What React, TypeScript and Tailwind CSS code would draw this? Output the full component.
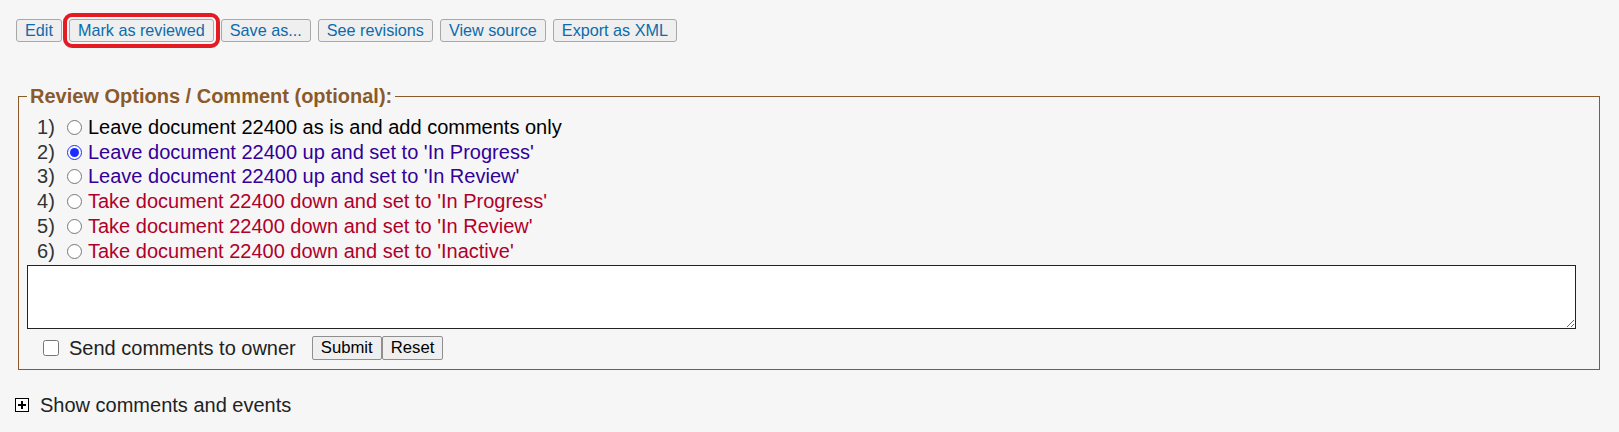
import { useState } from "react";

const toolbar = ["Edit", "Mark as reviewed", "Save as...", "See revisions", "View source", "Export as XML"];

const options = [
    { label: "Leave document 22400 as is and add comments only", tone: "text-black" },
    { label: "Leave document 22400 up and set to 'In Progress'", tone: "text-[#330099]" },
    { label: "Leave document 22400 up and set to 'In Review'", tone: "text-[#330099]" },
    { label: "Take document 22400 down and set to 'In Progress'", tone: "text-[#b0002a]" },
    { label: "Take document 22400 down and set to 'In Review'", tone: "text-[#b0002a]" },
    { label: "Take document 22400 down and set to 'Inactive'", tone: "text-[#b0002a]" },
];

const PlusBox = () => (
    <svg width="14" height="14" viewBox="0 0 14 14" className="shrink-0 -ml-px">
        <rect x="0.5" y="0.5" width="13" height="13" fill="#fff" stroke="#000" />
        <path d="M3 7h8M7 3v8" stroke="#000" strokeWidth="2" />
    </svg>
);

const App = () => {
    const [choice, setChoice] = useState(1);

    return (
        <div className="min-h-[432px] w-full bg-[#f6f6f6] px-[16px] pt-[19px] font-['Liberation_Sans',Arial,sans-serif] text-[#222]">
            <div className="flex items-center gap-[7px]">
                {toolbar.map((t) => (
                    <button
                        key={t}
                        className={
                            "h-[23px] px-2 border border-[#a8a8a8] rounded-[3px] bg-[#efefef] text-[16.2px] leading-none text-[#0b6bab] " +
                            (t === "Mark as reviewed" ? "outline-4 outline-[#e31b23] outline-offset-2" : "")
                        }
                    >
                        {t}
                    </button>
                ))}
            </div>

            <fieldset className="mt-[43px] ml-[2px] mr-[3px] border border-[#8b5a2b] px-[8px] pt-[7px] pb-[8px]">
                <legend className="px-[3px] text-[20px] leading-[23px] font-bold text-[#8b5a2b]">
                    Review Options / Comment (optional):
                </legend>

                <div className="pl-[10px] text-[20px] leading-[23px]">
                    {options.map((o, i) => (
                        <label key={i} className="flex items-center h-[24.8px]">
                            <span className="w-[30px] text-[#333]">{i + 1})</span>
                            <input
                                type="radio"
                                name="review"
                                checked={choice === i}
                                onChange={() => setChoice(i)}
                                className="w-[15px] h-[15px] m-0 accent-[#1a2cff]"
                            />
                            <span className={"ml-[6px] " + o.tone}>{o.label}</span>
                        </label>
                    ))}
                </div>

                <textarea className="block mt-[1px] w-[1549px] h-[64px] border border-[#222] bg-white" />

                <div className="mt-[7px] flex items-center h-[25px] text-[20px] leading-[23px]">
                    <input type="checkbox" className="ml-[16px] w-4 h-4 m-0" />
                    <span className="ml-[10px]">Send comments to owner</span>
                    <div className="ml-[16px] flex">
                        <button className="h-[24px] px-2 border border-[#8f8f8f] rounded-[2px] bg-[#efefef] text-[16.7px] leading-none text-black">
                            Submit
                        </button>
                        <button className="h-[24px] px-2 border border-[#8f8f8f] rounded-[2px] bg-[#efefef] text-[16.7px] leading-none text-black">
                            Reset
                        </button>
                    </div>
                </div>
            </fieldset>

            <div className="mt-[24px] flex items-center gap-[11px] text-[20px] leading-[23px]">
                <PlusBox />
                <span>Show comments and events</span>
            </div>
        </div>
    );
};

export default App;
